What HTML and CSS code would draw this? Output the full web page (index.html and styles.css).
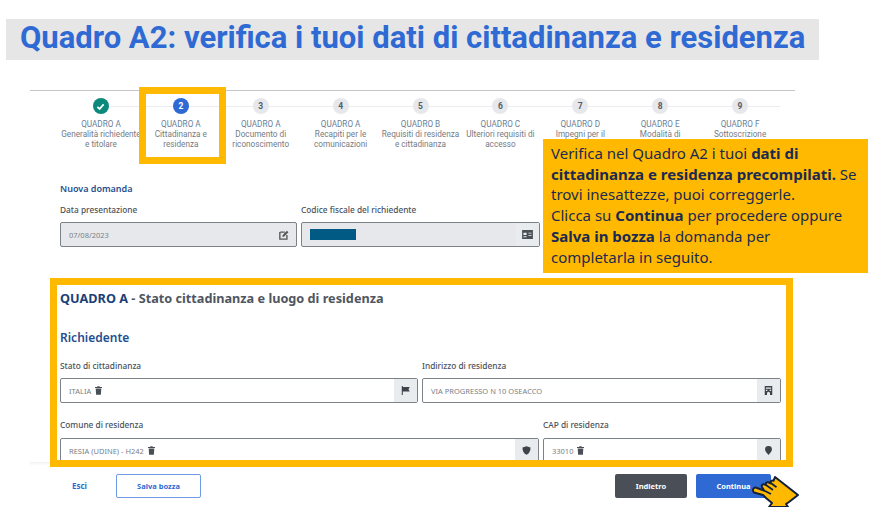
FILE: index.html
```html
<!DOCTYPE html>
<html lang="it">
<head>
<meta charset="utf-8">
<title>Quadro A2</title>
<link rel="stylesheet" href="styles.css">
</head>
<body>
<svg class="defs" width="0" height="0" aria-hidden="true">
  <symbol id="i-trash" viewBox="0 0 10 12"><path d="M3.5 0h3l.5 1h3v1.4H0V1h3zM1 3.2h8l-.6 8.8H1.6z"/></symbol>
  <symbol id="i-flag" viewBox="0 0 12 12"><path d="M1 0h1.4v12H1zM2.4 1.200h9.200l-1.600 3 1.600 3H2.400z"/></symbol>
  <symbol id="i-build" viewBox="0 0 12 12"><path d="M1 0h10v12H8V9.500a2 2 0 0 0-4 0V12H1zM2.500 2v1.500h7V2zm0 3v1.500h2V5zm5 0v1.500h2V5z" fill-rule="evenodd"/></symbol>
  <symbol id="i-shield" viewBox="0 0 12 12"><path d="M6 .3l5.300 1.600c.2 4.800-1.800 8.300-5.300 9.800C2.500 10.200.5 6.700.7 1.900z"/></symbol>
  <symbol id="i-pin" viewBox="0 0 12 12"><path d="M6 0a4.600 4.600 0 0 1 4.600 4.600C10.600 7.500 7.500 10 6 12 4.500 10 1.400 7.500 1.400 4.600A4.600 4.600 0 0 1 6 0z"/></symbol>
</svg>

<header class="band"><h1>Quadro A2: verifica i tuoi dati di cittadinanza e residenza</h1></header>

<main class="sheet">
  <ol class="stepper">
    <li class="step done"><span class="dot"><svg width="9" height="9" viewBox="0 0 10 10"><path d="M1.500 5.300l2.500 2.400 4.500-5" fill="none" stroke="#fff" stroke-width="1.900"/></svg></span><b>QUADRO A</b><span>Generalità richiedente<br>e titolare</span></li>
    <li class="step current"><span class="dot">2</span><b>QUADRO A</b><span>Cittadinanza e<br>residenza</span></li>
    <li class="step"><span class="dot">3</span><b>QUADRO A</b><span>Documento di<br>riconoscimento</span></li>
    <li class="step"><span class="dot">4</span><b>QUADRO A</b><span>Recapiti per le<br>comunicazioni</span></li>
    <li class="step"><span class="dot">5</span><b>QUADRO B</b><span>Requisiti di residenza<br>e cittadinanza</span></li>
    <li class="step"><span class="dot">6</span><b>QUADRO C</b><span>Ulteriori requisiti di<br>accesso</span></li>
    <li class="step"><span class="dot">7</span><b>QUADRO D</b><span>Impegni per il</span></li>
    <li class="step"><span class="dot">8</span><b>QUADRO E</b><span>Modalità di</span></li>
    <li class="step"><span class="dot">9</span><b>QUADRO F</b><span>Sottoscrizione</span></li>
  </ol>

  <section class="intro">
    <h3 class="subhead small">Nuova domanda</h3>
    <div class="row two-even">
      <div class="field">
        <label>Data presentazione</label>
        <div class="input disabled"><span class="val">07/08/2023</span>
          <svg class="plain" width="10" height="10" viewBox="0 0 12 12"><path d="M1.500 2.500h5.500M1 2.500v8.500h8.500V6" fill="none" stroke="#555" stroke-width="1.600"/><path d="M4.500 6l5-5.200 1.800 1.800-5 5.200-2.300.5z" fill="#555"/></svg>
        </div>
      </div>
      <div class="field">
        <label>Codice fiscale del richiedente</label>
        <div class="input disabled"><span class="redact"></span>
          <span class="addon"><svg width="11" height="9" viewBox="0 0 12 10"><path d="M0 0h12v10H0zM1.500 3v2.500h3.500V3zM7 3v1h3.500V3zM7 5.500v1h3.500v-1zM1.500 7v1h3.500V7z" fill="#4a4f57" fill-rule="evenodd"/></svg></span>
        </div>
      </div>
    </div>
  </section>

  <section class="panel">
    <h2 class="panel-title"><span>QUADRO A</span> - Stato cittadinanza e luogo di residenza</h2>
    <h3 class="subhead">Richiedente</h3>
    <div class="row even">
      <div class="field">
        <label>Stato di cittadinanza</label>
        <div class="input"><span class="val">ITALIA</span><svg class="bin"><use href="#i-trash"/></svg><span class="addon"><svg class="ico"><use href="#i-flag"/></svg></span></div>
      </div>
      <div class="field">
        <label>Indirizzo di residenza</label>
        <div class="input"><span class="val">VIA PROGRESSO N 10 OSEACCO</span><span class="addon"><svg class="ico"><use href="#i-build"/></svg></span></div>
      </div>
    </div>
    <div class="row wide">
      <div class="field">
        <label>Comune di residenza</label>
        <div class="input"><span class="val">RESIA (UDINE) - H242</span><svg class="bin"><use href="#i-trash"/></svg><span class="addon"><svg class="ico"><use href="#i-shield"/></svg></span></div>
      </div>
      <div class="field">
        <label>CAP di residenza</label>
        <div class="input"><span class="val">33010</span><svg class="bin"><use href="#i-trash"/></svg><span class="addon"><svg class="ico"><use href="#i-pin"/></svg></span></div>
      </div>
    </div>
  </section>

  <footer class="actions">
    <a class="exit">Esci</a>
    <button class="btn outline">Salva bozza</button>
    <button class="btn dark push">Indietro</button>
    <button class="btn primary">Continua</button>
  </footer>
</main>

<div class="frame frame-step"></div>
<div class="frame frame-panel"></div>
<aside class="callout">Verifica nel Quadro A2 i tuoi <b>dati di<br>cittadinanza e residenza precompilati.</b> Se<br>trovi inesattezze, puoi correggerle.<br>Clicca su <b>Continua</b> per procedere oppure<br><b>Salva in bozza</b> la domanda per<br>completarla in seguito.</aside>
<svg class="hand" width="48" height="32" viewBox="0 0 48 32">
  <path d="M2 15c0-2 2-3 4-2l7 2.500L11 12c-1-2 1-3.500 3-2.500l1 .5c-1-2 1-3.500 3-2.500l1.500 .8c-.5-2 1-3.500 3-2.500L24 2l23 18-9 7-3 2 2 3H18l3-4-6-5-3-3-9-2.500c-1-.5-1-1.500-1-2.500z" fill="#FFB900" stroke="#14213d" stroke-width="2" stroke-linejoin="round"/>
  <path d="M13 15.500l7 3.500M15 10l7 5M19.500 7.800l6 4.500" fill="none" stroke="#14213d" stroke-width="1.700"/>
</svg>
</body>
</html>
```

FILE: styles.css
```css
* { box-sizing: border-box; }
html, body { margin: 0; padding: 0; }
body {
  position: relative;
  width: 873px;
  height: 507px;
  overflow: hidden;
  background: #fff;
  font-family: "Noto Sans", "Open Sans", sans-serif;
  color: #444b55;
}
.defs { position: absolute; }
.band {
  margin: 19px 0 0 6px;
  width: 813px;
  height: 41px;
  background: #e6e6e6;
  padding-left: 14px;
}
.band h1 {
  margin: 0;
  font-family: Roboto, "Noto Sans", sans-serif;
  font-size: 31px;
  line-height: 38px;
  font-weight: 700;
  color: #2f6ad4;
  white-space: nowrap;
}
.sheet { margin-top: 30px; }
.stepper {
  list-style: none;
  margin: 0 78px 0 30px;
  padding: 7px 0 0 31px;
  height: 93px;
  border-top: 1.500px solid #c4c6c9;
  display: grid;
  grid-template-columns: repeat(9, 79.900px);
  background: linear-gradient(#ececee, #ececee) 70px 15px / 680px 1px no-repeat;
}
.step {
  display: flex;
  flex-direction: column;
  align-items: center;
  text-align: center;
  font-family: Roboto, "Noto Sans", sans-serif;
  font-size: 8.200px;
  line-height: 10px;
  color: #747b85;
  white-space: nowrap;
}
.step b { font-weight: 400; color: #6a7f98; margin-top: 4px; }
.dot {
  width: 16px;
  height: 16px;
  border-radius: 50%;
  background: #e6e8ec;
  color: #555c66;
  font-size: 8.500px;
  font-weight: 700;
  display: flex;
  align-items: center;
  justify-content: center;
  margin-bottom: 1px;
}
.done .dot { background: #0b8a7b; }
.current .dot { background: #2f6ad4; color: #fff; }
.intro { margin: 0 0 0 60px; width: 480px; }
.subhead {
  margin: 0;
  font-size: 12px;
  line-height: 16px;
  font-weight: 600;
  color: #1f4f8f;
}
.subhead.small { font-size: 9px; line-height: 12px; margin-bottom: 9px; }
.row { display: grid; column-gap: 4px; }
.two-even { grid-template-columns: 237px 239px; }
.even { grid-template-columns: 358px 359px; }
.wide { grid-template-columns: 479px 238px; margin-top: 16px; }
.field label {
  display: block;
  font-size: 8.300px;
  line-height: 12px;
  font-weight: 500;
  color: #4a515b;
  margin-bottom: 6px;
}
.wide .field label { margin-bottom: 7px; }
.input {
  position: relative;
  height: 25px;
  border: 1px solid #7d8188;
  border-radius: 2px;
  display: flex;
  align-items: center;
  padding-left: 8px;
  background: #fff;
  font-size: 7.500px;
  color: #7b8087;
}
.input.disabled { background: #e6e8eb; }
.val { margin-right: 4px; }
.plain { margin-left: auto; margin-right: 7px; }
.redact { width: 46px; height: 11px; background: #005a84; }
.addon {
  margin-left: auto;
  width: 23px;
  align-self: stretch;
  background: #e9ecef;
  display: flex;
  align-items: center;
  justify-content: center;
}
.ico { width: 9px; height: 9px; fill: #3d434b; }
.bin { width: 7px; height: 9px; fill: #4a4f57; }
.panel {
  margin: 42px 0 0 60px;
  width: 730px;
  height: 173px;
  overflow: hidden;
}
.panel-title {
  margin: 0 0 23px;
  font-size: 12.700px;
  line-height: 18px;
  font-weight: 700;
  color: #4f5661;
}
.panel-title span { color: #1c3f78; }
.panel .subhead { margin-bottom: 14px; }
.actions {
  margin: 0 78px 0 30px;
  padding: 12px 24px 0 42px;
  display: flex;
  align-items: flex-start;
  height: 36px;
  background: linear-gradient(#f2f2f2, #fff 4px);
}
.exit { font-size: 8px; line-height: 24px; font-weight: 700; color: #2f6ad4; margin-right: 29px; }
.btn {
  height: 24px;
  border-radius: 2px;
  border: 1px solid transparent;
  font: 700 7.500px "Noto Sans", sans-serif;
}
.outline { width: 85px; background: #fff; border-color: #6f9ae4; color: #2f6ad4; }
.dark { width: 72px; background: #4a4f57; color: #fff; }
.primary { width: 75px; margin-left: 9px; background: #2f6ad4; color: #fff; }
.push { margin-left: auto; }
.frame { position: absolute; border: 7px solid #ffb900; pointer-events: none; }
.frame-step { left: 139px; top: 87px; width: 87px; height: 77px; }
.frame-panel { left: 50px; top: 278px; width: 743px; height: 189px; }
.callout {
  position: absolute;
  left: 543px;
  top: 139px;
  width: 325px;
  height: 134px;
  background: #ffb900;
  padding: 4px 8px;
  font-size: 15px;
  line-height: 20.700px;
  color: #1b2a52;
  white-space: nowrap;
}
.hand { position: absolute; left: 751px; top: 475px; }
```
